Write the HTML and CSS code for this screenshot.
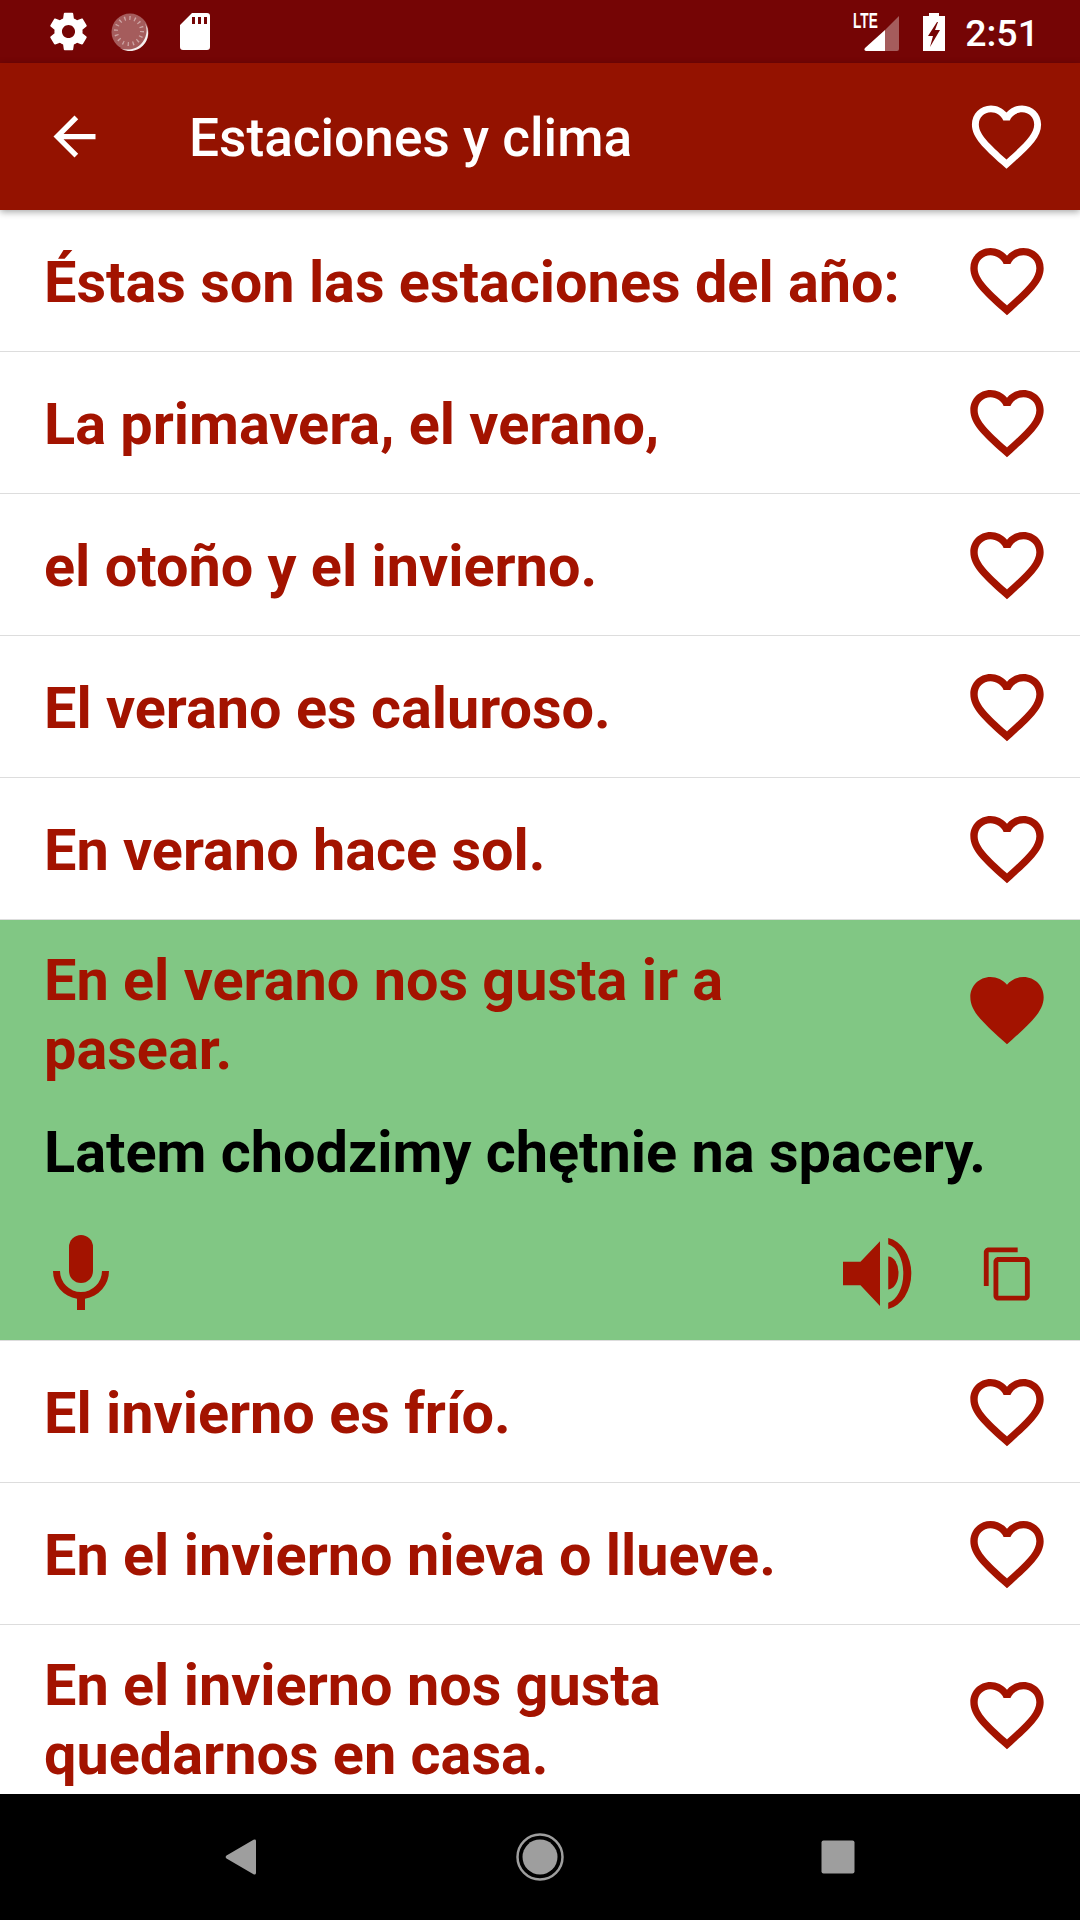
FILE: index.html

```html
<!DOCTYPE html>
<html lang="es">
<head>
  <meta charset="UTF-8">
  <title>Estaciones y clima</title>
  <link rel="stylesheet" href="styles.css">
</head>
<body>
  <svg class="defs" width="0" height="0">
    <symbol id="heart-line" viewBox="0 0 24 24"><path d="M16.5 3c-1.74 0-3.41.81-4.5 2.09C10.91 3.81 9.24 3 7.5 3 4.42 3 2 5.42 2 8.5c0 3.78 3.4 6.86 8.55 11.54L12 21.35l1.45-1.32C18.6 15.36 22 12.28 22 8.5 22 5.42 19.58 3 16.5 3zm-4.4 15.55l-.1.1-.1-.1C7.14 14.24 4 11.39 4 8.5 4 6.5 5.5 5 7.5 5c1.54 0 3.04.99 3.57 2.36h1.87C13.46 5.99 14.96 5 16.5 5c2 0 3.5 1.5 3.5 3.5 0 2.89-3.14 5.74-7.9 10.05z"/></symbol>
    <symbol id="heart-full" viewBox="0 0 24 24"><path d="M12 21.35l-1.45-1.32C5.4 15.36 2 12.28 2 8.5 2 5.42 4.42 3 7.5 3c1.74 0 3.41.81 4.5 2.09C13.09 3.81 14.76 3 16.5 3 19.58 3 22 5.42 22 8.5c0 3.78-3.4 6.86-8.55 11.54L12 21.35z"/></symbol>
  </svg>

  <div class="screen">
    <div class="status-bar">
      <div class="status-left">
        <svg class="ic-gear" viewBox="0 0 24 24"><path d="M19.43 12.98c.04-.32.07-.64.07-.98s-.03-.66-.07-.98l2.11-1.65c.19-.15.24-.42.12-.64l-2-3.46c-.12-.22-.39-.3-.61-.22l-2.49 1c-.52-.4-1.08-.73-1.69-.98l-.38-2.65C14.46 2.18 14.25 2 14 2h-4c-.25 0-.46.18-.49.42l-.38 2.65c-.61.25-1.17.59-1.69.98l-2.49-1c-.23-.09-.49 0-.61.22l-2 3.46c-.13.22-.07.49.12.64l2.11 1.65c-.04.32-.07.65-.07.98s.03.66.07.98l-2.11 1.65c-.19.15-.24.42-.12.64l2 3.46c.12.22.39.3.61.22l2.49-1c.52.4 1.08.73 1.69.98l.38 2.65c.03.24.24.42.49.42h4c.25 0 .46-.18.49-.42l.38-2.65c.61-.25 1.17-.59 1.69-.98l2.49 1c.23.09.49 0 .61-.22l2-3.46c.12-.22.07-.49-.12-.64l-2.11-1.65zM12 15.5c-1.93 0-3.5-1.57-3.5-3.5s1.57-3.5 3.5-3.5 3.5 1.57 3.5 3.5-1.57 3.5-3.5 3.5z"/></svg>
        <svg class="ic-disc" viewBox="0 0 38 38">
          <circle cx="19" cy="19" r="18.500" fill="#fff" opacity=".35"/>
          <path d="M34 10A18 18 0 0 1 9 35 19 19 0 0 0 34 10z" fill="#fff" opacity=".9"/>
          <circle cx="18" cy="18" r="13" fill="none" stroke="#fff" stroke-width="4" stroke-dasharray="1.300 3.800" opacity=".45"/>
        </svg>
        <svg class="ic-sd" viewBox="0 0 30 37"><path fill-rule="evenodd" d="M12 0h15a3 3 0 0 1 3 3v31a3 3 0 0 1-3 3H3a3 3 0 0 1-3-3V12zM12 4v7h3V4zM18 4v7h3V4zM24 4v7h3V4z"/></svg>
      </div>
      <div class="status-right">
        <div class="signal">
          <span class="lte">LTE</span>
          <svg class="ic-signal" viewBox="0 0 35 35">
            <path d="M35 0v33a2 2 0 0 1-2 2H21V14z" opacity=".35"/>
            <path d="M21 14v21H2a2 2 0 0 1-1-3z"/>
          </svg>
        </div>
        <svg class="ic-battery" viewBox="0 0 22 38"><path fill-rule="evenodd" d="M6 0h10v3h6v35H0V3h6zM14 9L5 23h5l-3 11 10-17h-5l3-8z"/></svg>
        <span class="clock">2:51</span>
      </div>
    </div>

    <div class="app-bar">
      <svg class="ic-back" viewBox="0 0 24 24"><path d="M20 11H7.83l5.59-5.59L12 4l-8 8 8 8 1.41-1.41L7.83 13H20v-2z"/></svg>
      <span class="app-title">Estaciones y clima</span>
      <svg class="ic-fav-top"><use href="#heart-line"/></svg>
    </div>

    <div class="list">
      <div class="row"><span class="phrase">Éstas son las estaciones del año:</span><svg class="ic-fav"><use href="#heart-line"/></svg></div>
      <div class="row"><span class="phrase">La primavera, el verano,</span><svg class="ic-fav"><use href="#heart-line"/></svg></div>
      <div class="row"><span class="phrase">el otoño y el invierno.</span><svg class="ic-fav"><use href="#heart-line"/></svg></div>
      <div class="row"><span class="phrase">El verano es caluroso.</span><svg class="ic-fav"><use href="#heart-line"/></svg></div>
      <div class="row"><span class="phrase">En verano hace sol.</span><svg class="ic-fav"><use href="#heart-line"/></svg></div>

      <div class="row-open">
        <div class="row-head">
          <span class="phrase">En el verano nos gusta ir a pasear.</span>
          <svg class="ic-fav"><use href="#heart-full"/></svg>
        </div>
        <div class="translation">Latem chodzimy chętnie na spacery.</div>
        <div class="actions">
          <svg class="ic-mic" viewBox="0 0 56 75">
            <rect x="16" y="0" width="24" height="48" rx="12"/>
            <path d="M0 36h7a21 21 0 0 0 42 0h7a28 28 0 0 1-24 27.700V75h-8V63.700A28 28 0 0 1 0 36z"/>
          </svg>
          <svg class="ic-speaker" viewBox="0 0 72 69">
            <path d="M0 23h17L36 3v63L17 46H0z"/>
            <path d="M44 18a10 16 0 0 1 0 32z"/>
            <path d="M44 0a27 35 0 0 1 0 69v-6a18 29 0 0 0 0-57z"/>
          </svg>
          <svg class="ic-copy" viewBox="0 0 24 24"><path d="M16 1H4c-1.100 0-2 .9-2 2v14h2V3h12V1zm3 4H8c-1.100 0-2 .9-2 2v14c0 1.100.9 2 2 2h11c1.100 0 2-.9 2-2V7c0-1.100-.9-2-2-2zm0 16H8V7h11v14z"/></svg>
        </div>
      </div>

      <div class="row"><span class="phrase">El invierno es frío.</span><svg class="ic-fav"><use href="#heart-line"/></svg></div>
      <div class="row"><span class="phrase">En el invierno nieva o llueve.</span><svg class="ic-fav"><use href="#heart-line"/></svg></div>
      <div class="row row-tall"><span class="phrase">En el invierno nos gusta quedarnos en casa.</span><svg class="ic-fav"><use href="#heart-line"/></svg></div>
    </div>

    <div class="nav-bar">
      <svg class="ic-nav" viewBox="0 0 64 64"><path d="M46 16v32a1.500 1.500 0 0 1-2.500 1.200L16.500 33.500a2 2 0 0 1 0-3L43.500 14.800A1.500 1.500 0 0 1 46 16z"/></svg>
      <svg class="ic-nav" viewBox="0 0 64 64"><circle cx="32" cy="32" r="17.500"/><circle cx="32" cy="32" r="22.500" fill="none" stroke="#9e9e9e" stroke-width="2.500"/></svg>
      <svg class="ic-nav" viewBox="0 0 64 64"><rect x="15.500" y="15.500" width="33" height="33" rx="2"/></svg>
    </div>
  </div>
</body>
</html>
```

FILE: styles.css

```css
* { box-sizing: border-box; }
body { margin: 0; font-family: Roboto, "Liberation Sans", sans-serif; background: #fff; }
.defs { position: absolute; }
svg { display: block; flex: none; }

.screen { width: 1080px; height: 1920px; display: flex; flex-direction: column; overflow: hidden; }

.status-bar { height: 63px; flex: none; background: #750505; display: flex; justify-content: space-between; align-items: center; padding: 0 41px 0 46px; fill: #fff; }
.status-left { display: flex; align-items: center; }
.status-right { display: flex; align-items: center; }
.ic-gear { width: 45px; height: 45px; margin-right: 20px; }
.ic-disc { width: 38px; height: 38px; margin-right: 31px; }
.ic-sd { width: 30px; height: 37px; }
.signal { position: relative; }
.lte { position: absolute; left: -11px; top: -3px; font-family: "Liberation Sans", sans-serif; font-size: 22px; font-weight: 700; line-height: 22px; color: #fff; transform: scaleX(.62); transform-origin: left top; }
.ic-signal { width: 35px; height: 35px; margin-top: 3px; }
.ic-battery { width: 22px; height: 38px; margin-left: 24px; }
.clock { font-size: 37.5px; font-weight: 500; color: #fff; margin-left: 20px; padding-top: 2px; }

.app-bar { height: 147px; flex: none; background: #941200; display: flex; align-items: center; padding: 0 32px 0 43px; fill: #fff; box-shadow: 0 2px 7px rgba(0, 0, 0, .35); position: relative; }
.ic-back { width: 63px; height: 63px; }
.app-title { font-size: 53.2px; font-weight: 500; color: #fff; margin-left: 83px; flex: 1; padding-top: 2px; }
.ic-fav-top { width: 83px; height: 83px; }

.list { flex: 1; overflow: hidden; }
.row { min-height: 142px; display: flex; align-items: center; justify-content: space-between; padding: 0 29px 0 44px; border-bottom: 1px solid #ddd; fill: #a31300; }
.row .phrase { padding-top: 5px; }
.row-tall { padding-top: 27px; padding-bottom: 27px; }
.row-tall .phrase { padding-top: 0; }
.phrase { font-size: 57.6px; font-weight: 700; line-height: 68.6px; color: #a31300; max-width: 865px; }
.ic-fav { width: 88px; height: 88px; }
.row-tall .ic-fav, .row-head .ic-fav { margin-bottom: 12px; }

.row-open { height: 421px; background: #81c784; border-bottom: 1px solid #ddd; padding: 27px 29px 0 44px; fill: #a31300; }
.row-head { display: flex; align-items: center; justify-content: space-between; }
.translation { font-size: 57.6px; font-weight: 700; line-height: 68.6px; color: #000; margin-top: 35px; white-space: nowrap; }
.actions { display: flex; align-items: center; margin-top: 47px; padding-left: 9px; }
.ic-mic { width: 56px; height: 75px; margin-right: auto; }
.ic-speaker { width: 74px; height: 71px; margin-top: 2px; }
.ic-copy { width: 58px; height: 58px; margin-left: 62px; margin-right: 14px; margin-top: 3px; }

.nav-bar { height: 126px; flex: none; background: #000; display: flex; align-items: center; justify-content: center; gap: 234px; fill: #9e9e9e; }
.ic-nav { width: 64px; height: 64px; }
```
